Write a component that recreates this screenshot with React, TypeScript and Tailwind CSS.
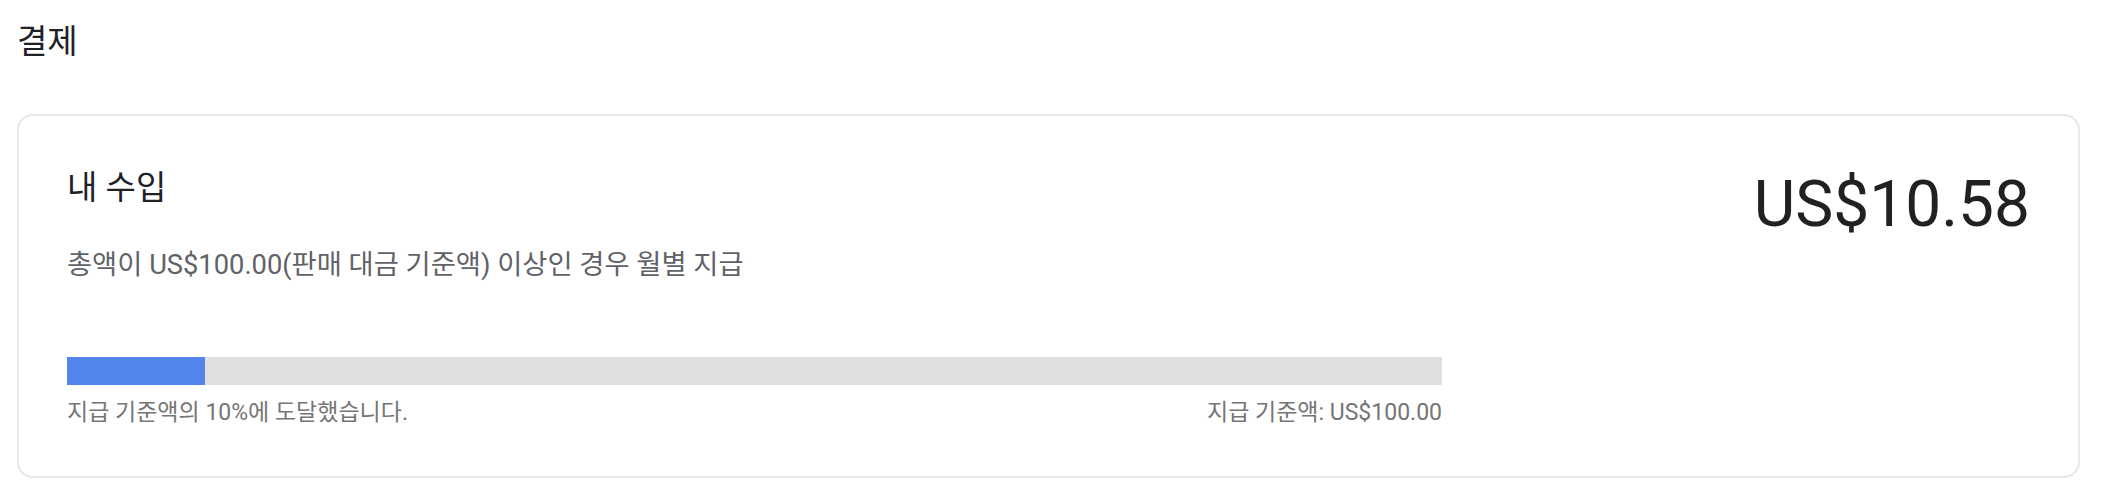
import React from "react";

// Payouts summary card: earnings so far vs. the payout threshold
interface Earnings {
  balance: string;
  threshold: string;
  percent: number;
}

const earnings: Earnings = {
  balance: "US$10.58",
  threshold: "US$100.00",
  percent: 10,
};

const App: React.FC = () => {
  return (
    <div className="min-h-screen bg-white pl-[17px] pr-[32px] pt-[22px] font-['Roboto','Noto_Sans_CJK_KR',sans-serif]">
      <h1 className="text-[33px] leading-[40px] font-normal text-[#202124]">결제</h1>

      <section className="mt-[52px] flex justify-between rounded-[16px] border-2 border-[#e7e7ec] px-[48px] pt-[52px] pb-[48px]">
        <div className="w-[1375px]">
          <h2 className="text-[33px] leading-[40px] font-normal text-[#202124]">내 수입</h2>
          <p className="mt-[39px] text-[27.3px] leading-[36px] text-[#5f6368]">
            총액이 {earnings.threshold}(판매 대금 기준액) 이상인 경우 월별 지급
          </p>

          {/* progress toward the payout threshold */}
          <div className="mt-[74px] h-[28px] w-full bg-[#e0e0e0]">
            <div className="h-full bg-[#5384ec]" style={{ width: `${earnings.percent}%` }} />
          </div>
          <div className="mt-[13px] flex justify-between text-[23px] leading-[30px] text-[#757575]">
            <span>지급 기준액의 {earnings.percent}%에 도달했습니다.</span>
            <span>지급 기준액: {earnings.threshold}</span>
          </div>
        </div>

        <div className="text-[64px] leading-[74px] text-[#212121]">{earnings.balance}</div>
      </section>
    </div>
  );
};

export default App;
